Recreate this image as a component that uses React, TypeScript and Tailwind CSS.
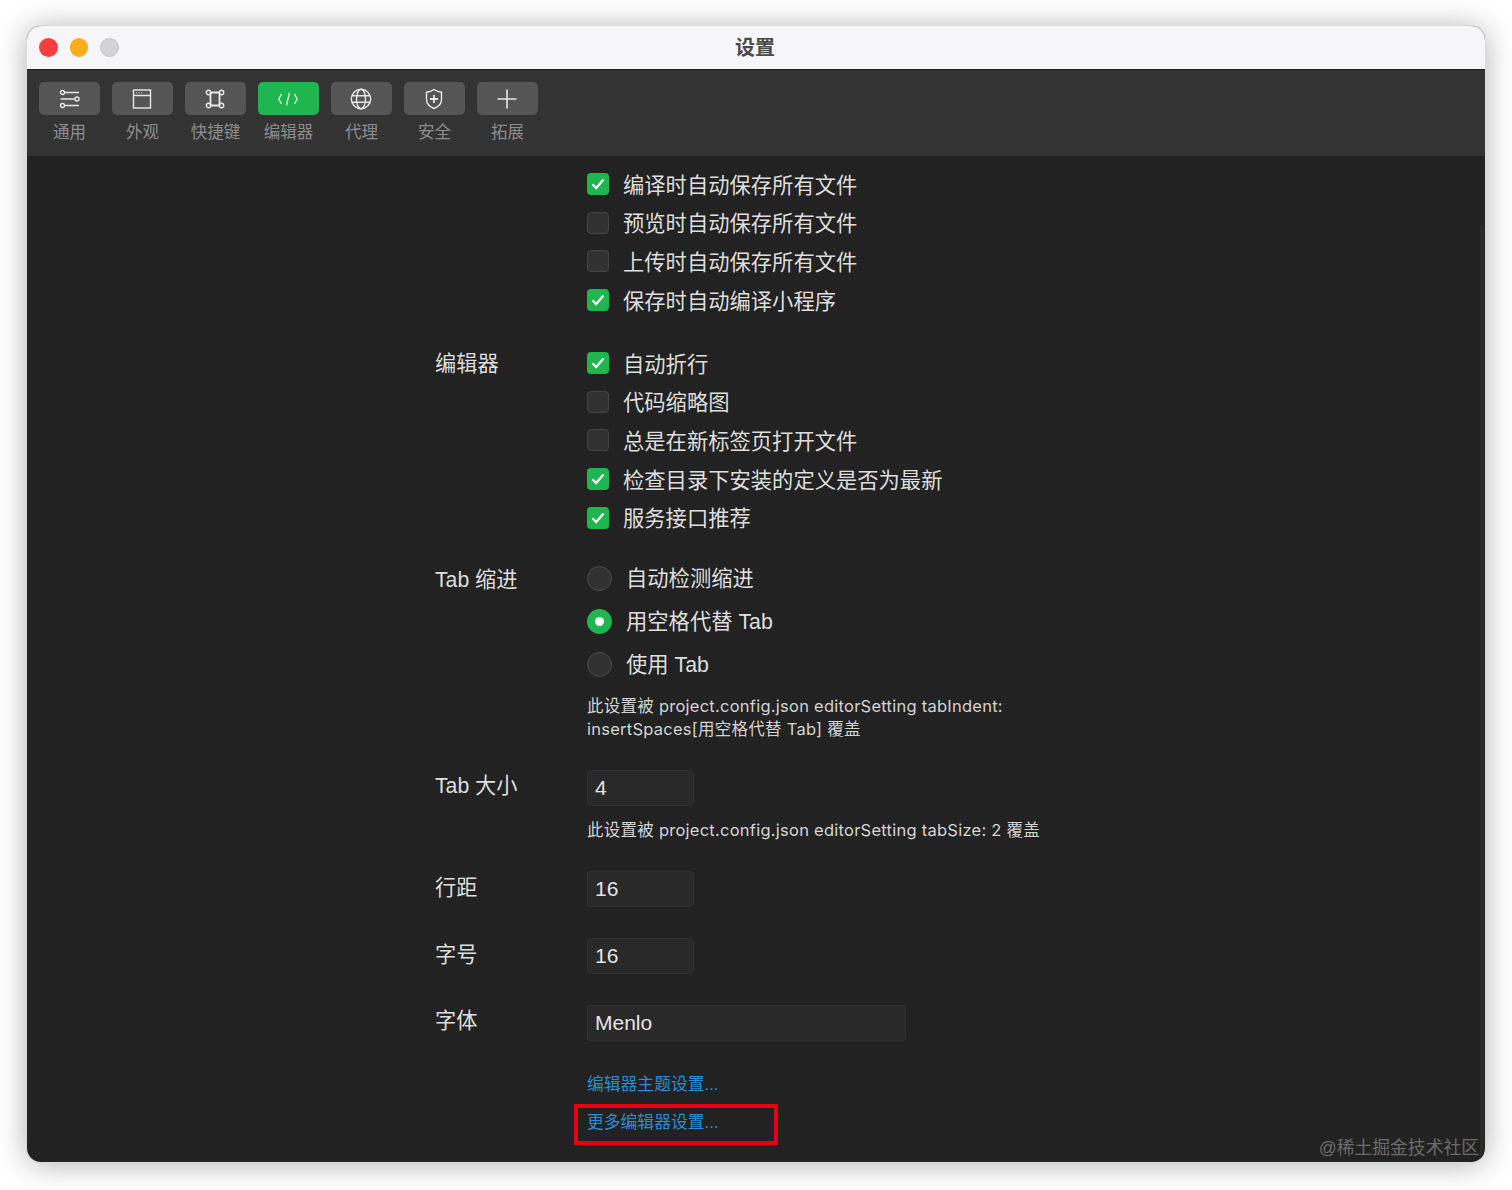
import type { ReactNode } from "react";

const tabs: { label: string; active?: boolean; icon: ReactNode }[] = [
  {
    label: "通用",
    icon: (
      <>
        <circle cx="3.5" cy="3.5" r="2" />
        <path d="M5.5 3.5H20" />
        <path d="M1.5 10H16" />
        <circle cx="18" cy="10" r="2" />
        <circle cx="3.5" cy="16.5" r="2" />
        <path d="M5.5 16.5H20" />
      </>
    ),
  },
  {
    label: "外观",
    icon: (
      <>
        <rect x="1.5" y="1" width="17" height="18" />
        <path d="M1.5 6.5H18.5" />
        <path d="M4 3.8h1M6.5 3.8h1M9 3.8h1" strokeWidth="1" />
      </>
    ),
  },
  {
    label: "快捷键",
    icon: (
      <>
        <circle cx="3.5" cy="3.5" r="2.2" />
        <circle cx="16.5" cy="3.5" r="2.2" />
        <circle cx="3.5" cy="16.5" r="2.2" />
        <circle cx="16.5" cy="16.5" r="2.2" />
        <path d="M5.7 3.5H14.3M5.7 16.5H14.3M5.5 3.5V16.5M14.5 3.5V16.5" strokeWidth="1.8" />
      </>
    ),
  },
  {
    label: "编辑器",
    active: true,
    icon: <path d="M3.5 5L0.8 10L3.5 15M16.5 5L19.2 10L16.5 15M11.5 3.5L8.5 16.5" />,
  },
  {
    label: "代理",
    icon: (
      <>
        <circle cx="10" cy="10" r="9.7" />
        <ellipse cx="10" cy="10" rx="4.5" ry="9.7" />
        <path d="M1 6.8H19M1 13.2H19" />
      </>
    ),
  },
  {
    label: "安全",
    icon: (
      <>
        <path d="M10 0.5C12.5 2.3 14.8 3 17.5 3.2V10.5C17.5 14.8 14.5 17.8 10 19.5C5.5 17.8 2.5 14.8 2.5 10.5V3.2C5.2 3 7.5 2.3 10 0.5Z" />
        <path d="M10 6V14M6 10H14" strokeWidth="1.8" />
      </>
    ),
  },
  {
    label: "拓展",
    icon: <path d="M10 0.5V19.5M0.5 10H19.5" strokeWidth="1.6" />,
  },
];

function TabItem({ label, active, icon }: { label: string; active?: boolean; icon: ReactNode }) {
  return (
    <div className="flex w-[61px] flex-col items-center">
      <div
        className={
          active
            ? "flex h-[33px] w-[61px] items-center justify-center rounded-[5px] bg-[#1fb54f] text-[#d5f3dd]"
            : "flex h-[33px] w-[61px] items-center justify-center rounded-[5px] bg-[#555555] text-[#e8e8e8]"
        }
      >
        <svg
          width="20"
          height="20"
          viewBox="0 0 20 20"
          fill="none"
          stroke="currentColor"
          strokeWidth="1.4"
          className="mr-[1px] overflow-visible"
        >
          {icon}
        </svg>
      </div>
      <span className="mt-[5px] whitespace-nowrap text-[16.5px] leading-[24px] text-[#8d8d8d]">{label}</span>
    </div>
  );
}

function Check({ label, checked }: { label: string; checked?: boolean }) {
  return (
    <div className="flex h-[38.6px] items-center">
      {checked ? (
        <span className="flex h-[22px] w-[22px] items-center justify-center rounded-[4px] bg-[#1fb54f]">
          <svg width="14" height="12" viewBox="0 0 14 12" fill="none" stroke="#ffffff" strokeWidth="2.2">
            <path d="M1.5 6.2L5.2 10L12.5 1.5" />
          </svg>
        </span>
      ) : (
        <span className="h-[22px] w-[22px] rounded-[4px] border border-[#454545] bg-[#313131]" />
      )}
      <span className="ml-[14px] pt-[3px] text-[21.3px] leading-[30px] text-[#dedede]">{label}</span>
    </div>
  );
}

function Radio({ label, checked }: { label: string; checked?: boolean }) {
  return (
    <div className="flex h-[43px] items-center">
      {checked ? (
        <span className="flex h-[25px] w-[25px] items-center justify-center rounded-full bg-[#1fb54f]">
          <span className="h-[9px] w-[9px] rounded-full bg-white" />
        </span>
      ) : (
        <span className="h-[25px] w-[25px] rounded-full border border-[#4a4a4a] bg-[#313131]" />
      )}
      <span className="ml-[14px] pt-[1px] text-[21.3px] leading-[30px] text-[#dedede]">{label}</span>
    </div>
  );
}

function Field({ value, wide }: { value: string; wide?: boolean }) {
  return (
    <div
      className={
        wide
          ? "flex h-[36px] w-[319px] items-center rounded-[3px] border border-[#323232] bg-[#292929] pl-[7px] text-[21px] text-[#e4e4e4]"
          : "flex h-[36px] w-[107px] items-center rounded-[3px] border border-[#323232] bg-[#292929] pl-[7px] text-[21px] text-[#e4e4e4]"
      }
    >
      {value}
    </div>
  );
}

function Label({ children, className }: { children: ReactNode; className: string }) {
  return <div className={`w-[152px] shrink-0 text-[21.2px] text-[#dedede] ${className}`}>{children}</div>;
}

export default function App() {
  return (
    <div
      className="h-[1190px] overflow-hidden bg-white pl-[27px] pt-[26px]"
      style={{ fontFamily: '"Liberation Sans", "Noto Sans CJK SC", sans-serif' }}
    >
      <div className="relative flex h-[1136px] w-[1458px] flex-col overflow-hidden rounded-[14px] bg-[#222222] shadow-[0_0_0_1px_#dadada,0_2px_30px_rgba(0,0,0,0.32)]">
        {/* title bar */}
        <div className="grid h-[44px] shrink-0 grid-cols-[1fr_auto_1fr] items-center border-b border-[#1c1c1c] bg-[#f6f6f8]">
          <div className="flex gap-[12px] pl-[12px]">
            <span className="h-[18.5px] w-[18.5px] rounded-full bg-[#fc3d3f]" />
            <span className="h-[18.5px] w-[18.5px] rounded-full bg-[#fcac1c]" />
            <span className="h-[18.5px] w-[18.5px] rounded-full border border-[#c4c4c4] bg-[#d3d3d3]" />
          </div>
          <div className="mr-[2px] text-[20px] font-bold text-[#4a4a4a]">设置</div>
        </div>

        {/* toolbar */}
        <div className="flex h-[86px] shrink-0 gap-[12px] bg-[#333333] pl-[12px] pt-[12px]">
          {tabs.map((t) => (
            <TabItem key={t.label} label={t.label} active={t.active} icon={t.icon} />
          ))}
        </div>

        {/* form */}
        <div className="flex flex-col pl-[408px] pt-[9px]">
          <div className="flex">
            <Label className="leading-[38.6px]">{""}</Label>
            <div>
              <Check label="编译时自动保存所有文件" checked />
              <Check label="预览时自动保存所有文件" />
              <Check label="上传时自动保存所有文件" />
              <Check label="保存时自动编译小程序" checked />
            </div>
          </div>

          <div className="mt-[24.6px] flex">
            <Label className="pt-[1px] leading-[38.6px]">编辑器</Label>
            <div>
              <Check label="自动折行" checked />
              <Check label="代码缩略图" />
              <Check label="总是在新标签页打开文件" />
              <Check label="检查目录下安装的定义是否为最新" checked />
              <Check label="服务接口推荐" checked />
            </div>
          </div>

          <div className="mt-[20px] flex">
            <Label className="pt-[1px] leading-[43px]">Tab 缩进</Label>
            <div>
              <Radio label="自动检测缩进" />
              <Radio label="用空格代替 Tab" checked />
              <Radio label="使用 Tab" />
              <p
                className="mt-[9px] w-[460px] text-[16.5px] leading-[23px] tracking-[0.25px] text-[#d4d4d4]"
                style={{ fontFamily: 'Inter, "Noto Sans CJK SC", sans-serif' }}
              >
                此设置被 project.config.json editorSetting tabIndent: insertSpaces[用空格代替 Tab] 覆盖
              </p>
            </div>
          </div>

          <div className="mt-[29px] flex">
            <Label className="leading-[32px]">Tab 大小</Label>
            <div>
              <Field value="4" />
              <p
                className="mt-[13px] whitespace-nowrap text-[16.5px] leading-[23px] tracking-[0.25px] text-[#d4d4d4]"
                style={{ fontFamily: 'Inter, "Noto Sans CJK SC", sans-serif' }}
              >
                此设置被 project.config.json editorSetting tabSize: 2 覆盖
              </p>
            </div>
          </div>

          <div className="mt-[29px] flex">
            <Label className="leading-[34px]">行距</Label>
            <Field value="16" />
          </div>

          <div className="mt-[31px] flex">
            <Label className="leading-[34px]">字号</Label>
            <Field value="16" />
          </div>

          <div className="mt-[31px] flex">
            <Label className="leading-[32px]">字体</Label>
            <Field value="Menlo" wide />
          </div>

          <div className="mt-[32px] pl-[152px] text-[16.8px] leading-[24px] text-[#2a8ed6]">
            <div>编辑器主题设置...</div>
            <div className="relative mt-[14px]">
              更多编辑器设置...
              <span className="absolute left-[-13px] top-[-7px] h-[41px] w-[204px] border-[4px] border-[#e60012]" />
            </div>
          </div>
        </div>

        {/* scrollbar track and watermark sit over the panel */}
        <span className="absolute bottom-0 right-[1px] top-[200px] w-[4px] bg-[#2b2b2b]" />
        <span className="absolute bottom-[1px] right-[6px] text-[17.8px] leading-[26px] text-[#6b6b6b]">
          @稀土掘金技术社区
        </span>
      </div>
    </div>
  );
}
